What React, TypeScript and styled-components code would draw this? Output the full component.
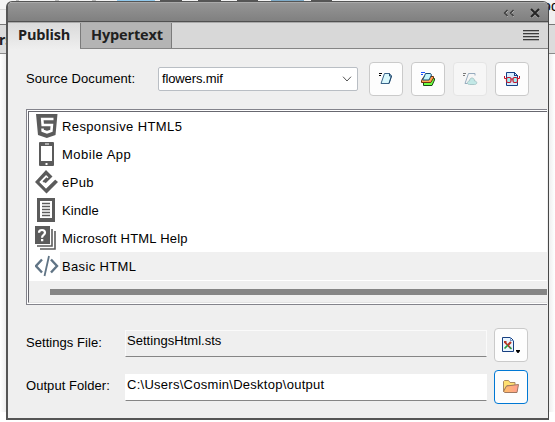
import React from "react";
import styled, { createGlobalStyle } from "styled-components";

const Global = createGlobalStyle`
  * { box-sizing: border-box; }
  html, body { margin: 0; padding: 0; overflow: hidden; }
  body { font: 13px/16px "Liberation Sans", Arial, sans-serif; color: #000; }
  svg { display: block; flex: none; }
`;

const Desktop = styled.div`
  position: relative;
  width: 555px;
  height: 422px;
  overflow: hidden;
  background: #fff;
`;
const BackTop = styled.div`
  height: 24px;
  background: linear-gradient(#f4f4f4 9px, #d8d8d8 9px, #d8d8d8 10px, #f0f0f0 10px);
`;
const BackTools = styled.div`
  height: 3px;
  padding-left: 16px;
  display: flex;
`;
const BackTool = styled.i<{ $w: number; $gap: number; $c: string }>`
  width: ${(p) => p.$w}px;
  height: 1px;
  margin-left: ${(p) => p.$gap}px;
  background: ${(p) => p.$c};
`;
const BackTabs = styled.div`
  height: 30px;
  border-top: 1px solid #777;
  border-bottom: 1px solid #8b8b8b;
  background: #dcdcdc;
  font: bold 14px/30px "Noto Sans", sans-serif;
  color: #202020;
  white-space: nowrap;
  text-indent: -1px;
`;
const BackPage = styled.div`
  height: 358px;
  background: linear-gradient(90deg, #fff, #eee 6px, #eee 549px, #fff);
`;
const BackWord = styled.span`
  position: absolute;
  left: 533px;
  top: -2px;
  font: 14px/16px "Liberation Sans", sans-serif;
`;

const Panel = styled.div`
  position: absolute;
  left: 6px;
  top: 1px;
  width: 543px;
  height: 419px;
  border: solid #555;
  border-width: 1px 1px 2px 2px;
  border-right-color: #484848;
  border-radius: 6px 6px 0 0;
  background: #efefef;
  overflow: hidden;
  display: flex;
  flex-direction: column;
`;
const TitleBar = styled.div`
  height: 20px;
  flex: none;
  border-bottom: 1px solid #505050;
  border-top: 1px solid #aaa;
  background: linear-gradient(#959595, #808080);
  display: flex;
  justify-content: flex-end;
  align-items: center;
  gap: 15px;
  padding: 2px 8px 0 0;
`;
const TabBar = styled.div`
  height: 27px;
  flex: none;
  display: flex;
  background: #d8d8d8;
  border-top: 1px solid #aaa;
  border-bottom: 1px solid #858585;
`;
const Tab = styled.div<{ $active?: boolean }>`
  width: ${(p) => (p.$active ? 72 : 92)}px;
  height: ${(p) => (p.$active ? 27 : 25)}px;
  padding-left: 10px;
  font: bold 14.5px/23px "Open Sans", "Noto Sans", sans-serif;
  letter-spacing: ${(p) => (p.$active ? -0.2 : -0.15)}px;
  color: #202020;
  white-space: nowrap;
  background: ${(p) => (p.$active ? "linear-gradient(#dadada, #efefef)" : "#b4b4b4")};
  border: solid #7b7b7b;
  border-width: ${(p) => (p.$active ? "0" : "0 1px")};
`;
const MenuSlot = styled.div`
  margin-left: auto;
  padding: 7px 9px 0 0;
`;

const SourceRow = styled.div`
  display: flex;
  align-items: center;
  height: 34px;
  margin-top: 13px;
  padding-left: 18px;
`;
const Text = styled.span<{ $ls?: number; $w?: number }>`
  width: ${(p) => (p.$w ? p.$w + "px" : "auto")};
  letter-spacing: ${(p) => p.$ls ?? 0}px;
  white-space: nowrap;
  flex: none;
`;
const Select = styled.div`
  width: 200px;
  height: 24px;
  margin-right: 11px;
  padding: 0 5px 0 3px;
  border: 1px solid #b9bec4;
  border-radius: 2px;
  background: #fff;
  display: flex;
  align-items: center;
  justify-content: space-between;
`;
const Buttons = styled.div`
  display: flex;
  gap: 8px;
`;
const Button = styled.div<{ $state?: "disabled" | "focus" }>`
  width: 34px;
  height: 34px;
  border: 1px solid ${(p) => (p.$state === "focus" ? "#0078d4" : p.$state === "disabled" ? "#e5e5e5" : "#cacaca")};
  border-radius: 4px;
  background: ${(p) => (p.$state === "disabled" ? "#f6f6f6" : "#fdfdfd")};
  display: flex;
  align-items: center;
  justify-content: center;
`;

const ListFrame = styled.div`
  margin: 13px 0 0 18px;
  height: 196px;
  width: 521px;
  border: 1px solid #83838b;
  border-right: 0;
  background: #fff;
  padding: 1px 0 1px 1px;
`;
const List = styled.div`
  height: 192px;
  border: solid #686870;
  border-width: 1px 0 0 1px;
  border-bottom: 1px solid #e3e3e3;
  display: flex;
  flex-direction: column;
`;
const Item = styled.div`
  height: 28px;
  flex: none;
  display: flex;
`;
const ItemIcon = styled.div`
  width: 31px;
  display: flex;
  align-items: center;
  padding-left: 6px;
`;
const ItemLabel = styled.div<{ $selected?: boolean; $ls: number }>`
  flex: 1;
  padding-left: 2px;
  line-height: 29px;
  letter-spacing: ${(p) => p.$ls}px;
  background: ${(p) => (p.$selected ? "#f0f0f0" : "#fff")};
`;
const ScrollTrack = styled.div`
  margin-top: 1px;
  height: 21px;
  background: #efefef;
  padding: 8px 0 0 21px;
`;
const ScrollThumb = styled.div`
  height: 6px;
  background: #858585;
`;

const Form = styled.div`
  padding: 23px 0 0 18px;
  display: flex;
  flex-direction: column;
  gap: 8px;
`;
const FieldRow = styled.div<{ $labelUp: number }>`
  height: 34px;
  display: flex;
  align-items: center;
  & > span { margin-top: -${(p) => p.$labelUp}px; }
`;
const Field = styled.div<{ $readOnly?: boolean; $ls: number }>`
  width: 362px;
  height: 27px;
  margin: ${(p) => (p.$readOnly ? "-3px" : "1px")} 7px 0 0;
  padding-left: 1px;
  border: solid ${(p) => (p.$readOnly ? "#fafafa" : "#fff")};
  border-width: 1px;
  border-bottom-color: #858585;
  background: ${(p) => (p.$readOnly ? "#efefef" : "#fff")};
  line-height: ${(p) => (p.$readOnly ? 20 : 19)}px;
  letter-spacing: ${(p) => p.$ls}px;
`;

/* Small pictures, on a 24-pixel grid */
const Html5 = () => (
  <svg width="24" height="26" viewBox="0 0 24 26">
    <path fill="#5b5b5b" d="M1 1h21.5l-2 21-8.7 3L3 22z" />
    <path fill="none" stroke="#fff" strokeWidth="2.6" d="M18.5 6H7.2l.5 6h9.2l-.5 5.8-4.4 1.5-4.3-1.5-.2-2.3" />
  </svg>
);
const Phone = () => (
  <svg width="24" height="26" viewBox="0 0 24 26">
    <rect x="4" y="1" width="15" height="24" rx="1" fill="#5b5b5b" />
    <path fill="#fff" d="M6 5h11v15H6zM10 2.5h4v1h-4zM10.5 22h2v2h-2z" />
  </svg>
);
const EPub = () => (
  <svg width="24" height="24" viewBox="0 0 24 24">
    <path fill="#5b5b5b" d="M11 0l6.5 6.5-6.8 6.8-1.8-1.8 4.2-4.2-2-2L4.500 12l6.500 6.500L20 9.500l3 2.500L11.500 23.500 0 12z" />
    <path fill="#fff" d="M11 5.300l-6.500 6.700 6.500 6.500 9.500-9.200-2-2-7.700 7.600-2.600-2.700L13.500 7.400z" />
    <path fill="none" stroke="#5b5b5b" strokeWidth="2.200" d="M8.300 12l4-4" />
  </svg>
);
const Kindle = () => (
  <svg width="24" height="26" viewBox="0 0 24 26">
    <path fill="#5b5b5b" d="M2 1h18v24H2z" />
    <path fill="#fff" d="M5 4h12v17H5z" />
    <path stroke="#5b5b5b" strokeWidth="1.3" d="M7 6.5h8M7 9.500h8M7 12.500h8M7 15.500h8M7 18.500h8" />
  </svg>
);
const Help = () => (
  <svg width="24" height="26" viewBox="0 0 24 26">
    <path fill="#5b5b5b" d="M0 1h15v18H0z" />
    <path fill="none" stroke="#5b5b5b" strokeWidth="1.6" d="M17 4v17H2M20 6v18H5" />
    <path fill="none" stroke="#fff" strokeWidth="2.2" d="M4 7.7Q4 5 7 5t3 2.8c0 2.3-3 2-3 5" />
    <path fill="#fff" d="M6 14h2.3v2.3H6z" />
  </svg>
);
const Code = () => (
  <svg width="24" height="24" viewBox="0 0 24 24">
    <path fill="none" stroke="#607485" strokeWidth="2.4" d="M7 5.500L1 12l6 6.500M16 5.500l6 6.500-6 6.500" />
    <path fill="none" stroke="#607485" strokeWidth="1.800" d="M14 2L9.500 22" />
  </svg>
);
const Generate = ({ faded }: { faded?: boolean }) => (
  <svg width="16" height="16" viewBox="0 0 16 16" opacity={faded ? 0.5 : 1}>
    <path fill="#000" d="M1 2h3v1H1zM1 4h2v1H1z" />
    <path
      fill={faded ? "#f6f6f6" : "#d9f8fc"}
      stroke="#3a6388"
      d={faded ? "M13 4.500V2.500H6.500L3 12.500h3" : "M6.500 2.500h5l2 2.500-2.500 7.500H3z"}
    />
    {faded ? (
      <path fill="#8fdcd8" stroke="#5f9a9d" d="M7.500 13.500c-3 0-2.500-3.500 0-3.500 0-4 5-4 5 0 3 0 3 3.500 0 3.500z" />
    ) : (
      <path fill="none" stroke="#21496e" d="M11.500 2.500v2.500h2L11 12.500" />
    )}
  </svg>
);
const Stack = () => (
  <svg width="16" height="16" viewBox="0 0 16 16">
    <path fill="#1750ff" d="M1 1h4v1H1zM1 3h2v1H1z" />
    <path fill="#6dff45" stroke="#164b13" d="M5 7.500h9.500v1.500l-2.500 5.500H3.500v-3z" />
    <path fill="#ffa34f" stroke="#70320d" d="M4 5.500h9.500v1.500l-2.700 4.500H1.500V9.500z" />
    <path fill="#c5f5fc" stroke="#174a70" d="M5.500 2.500h5l1 1.500-2.500 5H2.500L4.500 5z" />
  </svg>
);
const Glasses = () => (
  <svg width="16" height="16" viewBox="0 0 16 16">
    <path fill="#d8edff" stroke="#174184" d="M2.500 1.500h8l3 3v10h-11z" />
    <path fill="#174184" d="M10 1h1v3h3v1h-4z" />
    <g fill="#9deff3" stroke="#c51229" strokeWidth="1.2">
      <rect x="2.500" y="6.500" width="4.500" height="5" rx="1.500" />
      <rect x="9" y="6.500" width="4.500" height="5" rx="1.500" />
    </g>
    <path fill="none" stroke="#c51229" d="M7 8h2M2.500 7.500h-2V5M13.500 7.500h2V5" />
  </svg>
);
const Settings = () => (
  <svg width="20" height="18" viewBox="0 0 20 18">
    <path fill="#e9f5ff" stroke="#173f80" d="M1.500 1.500h8l3 3v11h-11z" />
    <path fill="#7597c8" d="M9 1h1v3h3v1H9z" />
    <path stroke="#b53525" strokeWidth="1.700" d="M4 6.500l6 6" />
    <path stroke="#279b42" strokeWidth="1.700" d="M3.500 12.500l3.500-3.500" />
    <path stroke="#b53525" strokeWidth="2.200" d="M7 9l3-3M3 6h2.500" />
    <path stroke="#279b42" strokeWidth="1.500" d="M8.500 11l2 2" />
    <path fill="#000" d="M15 14h4v1l-1.500 2h-1L15 15z" />
  </svg>
);
const Folder = () => (
  <svg width="18" height="16" viewBox="0 0 18 16">
    <defs>
      <linearGradient id="folder" x2="1">
        <stop stopColor="#ffc166" />
        <stop offset="1" stopColor="#ff9c92" />
      </linearGradient>
    </defs>
    <path fill="#ffe071" stroke="#aa8b63" d="M1.500 12.500v-10l1-1h4l1.500 2h5v3H5z" />
    <path fill="url(#folder)" stroke="#a07860" d="M1.500 12.500l3-5.500 12-1.500-1.500 8H3z" />
  </svg>
);

const formats = [
  { name: "Responsive HTML5", icon: <Html5 />, ls: 0.38 },
  { name: "Mobile App", icon: <Phone />, ls: 0.5 },
  { name: "ePub", icon: <EPub />, ls: 0.4 },
  { name: "Kindle", icon: <Kindle />, ls: 0.1 },
  { name: "Microsoft HTML Help", icon: <Help />, ls: 0.22 },
  { name: "Basic HTML", icon: <Code />, ls: 0.35 },
];

/* [gap before, width, colour] of the toolbar buttons peeking out above the panel */
const tools = [
  [0, 3, "#bbb"], [36, 4, "#bbb"], [33, 4, "#bbb"], [21, 38, "#91c9ec"], [5, 22, "#555"],
  [16, 23, "#555"], [16, 21, "#555"], [13, 33, "#7eabc8"], [7, 21, "#555"],
] as const;

export default function App() {
  return (
    <Desktop>
      <Global />
      <BackTop>
        <BackTools>{tools.map(([gap, w, c], i) => <BackTool key={i} $gap={gap} $w={w} $c={c} />)}</BackTools>
        <BackWord>Doc</BackWord>
      </BackTop>
      <BackTabs>rs</BackTabs>
      <BackPage />
      <Panel>
        <TitleBar>
          <svg width="12" height="10" viewBox="0 0 12 10">
            <path fill="none" stroke="#bbb" d="M5 3L2 6l3 3M11 3L8 6l3 3" />
            <path fill="none" stroke="#3b3b3b" strokeWidth="1.3" d="M4.500 2L1.500 5l3 3M10.500 2L7.500 5l3 3" />
          </svg>
          <svg width="10" height="10" viewBox="0 0 10 10">
            <path stroke="#aaa" strokeWidth="2" d="M1 2l8 8M9 2l-8 8" />
            <path stroke="#262626" strokeWidth="2" d="M1 1l8 8M9 1L1 9" />
          </svg>
        </TitleBar>
        <TabBar>
          <Tab $active>Publish</Tab>
          <Tab>Hypertext</Tab>
          <MenuSlot>
            <svg width="16" height="11" viewBox="0 0 16 11">
              <path stroke="#aaa" d="M0 1.500h16M0 4.500h16M0 7.500h16M0 10.500h16" />
              <path stroke="#3c3c3c" d="M0 .5h16M0 3.500h16M0 6.500h16M0 9.500h16" />
            </svg>
          </MenuSlot>
        </TabBar>
        <SourceRow>
          <Text $w={132} $ls={0.1}>Source Document:</Text>
          <Select>
            <Text $ls={-0.13}>flowers.mif</Text>
            <svg width="10" height="6" viewBox="0 0 10 6">
              <path fill="none" stroke="#555" d="M1 .7L5 5 9 .7" />
            </svg>
          </Select>
          <Buttons>
            <Button><Generate /></Button>
            <Button><Stack /></Button>
            <Button $state="disabled"><Generate faded /></Button>
            <Button><Glasses /></Button>
          </Buttons>
        </SourceRow>
        <ListFrame>
          <List>
            {formats.map((f) => (
              <Item key={f.name}>
                <ItemIcon>{f.icon}</ItemIcon>
                <ItemLabel $ls={f.ls} $selected={f.name === "Basic HTML"}>{f.name}</ItemLabel>
              </Item>
            ))}
            <ScrollTrack><ScrollThumb /></ScrollTrack>
          </List>
        </ListFrame>
        <Form>
          <FieldRow $labelUp={5}>
            <Text $w={99} $ls={0.05}>Settings File:</Text>
            <Field $readOnly $ls={0.03}>SettingsHtml.sts</Field>
            <Button><Settings /></Button>
          </FieldRow>
          <FieldRow $labelUp={2}>
            <Text $w={99} $ls={0.05}>Output Folder:</Text>
            <Field $ls={0.27}>C:\Users\Cosmin\Desktop\output</Field>
            <Button $state="focus"><Folder /></Button>
          </FieldRow>
        </Form>
      </Panel>
    </Desktop>
  );
}
